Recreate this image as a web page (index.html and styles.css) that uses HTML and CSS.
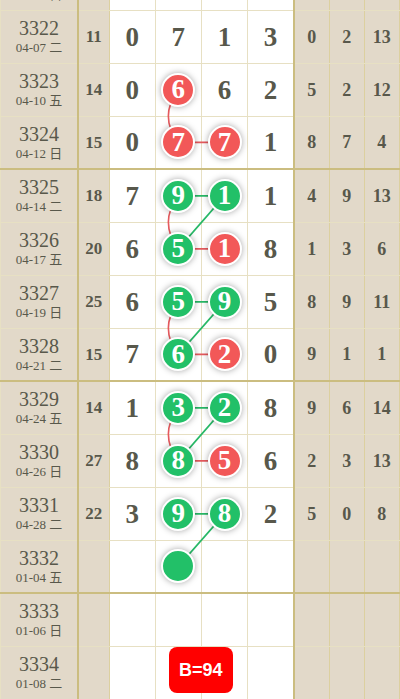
FILE: index.html
```html
<!DOCTYPE html>
<html lang="zh">
<head>
    <meta charset="UTF-8">
    <meta name="viewport" content="width=device-width, initial-scale=1.0">
    <title>走势图</title>
    <link rel="stylesheet" href="styles.css">
</head>
<body>
    <div class="board" id="board">
        <table class="grid">
            <colgroup>
                <col class="c-period">
                <col class="c-sum">
                <col class="c-digit">
                <col class="c-digit">
                <col class="c-digit">
                <col class="c-digit">
                <col class="c-side">
                <col class="c-side">
                <col class="c-side">
            </colgroup>
            <tbody id="rows"></tbody>
        </table>
        <svg class="links" id="links"></svg>
    </div>

    <script>
        // period, date, sum, four digits ('r'/'g' prefix = ball), three right values
        const rows = [
            ['3321', '04-05 日', '13', ['2', '5', '3', '3'], ['1', '9', '12']],
            ['3322', '04-07 二', '11', ['0', '7', '1', '3'], ['0', '2', '13']],
            ['3323', '04-10 五', '14', ['0', 'r6', '6', '2'], ['5', '2', '12']],
            ['3324', '04-12 日', '15', ['0', 'r7', 'r7', '1'], ['8', '7', '4']],
            ['3325', '04-14 二', '18', ['7', 'g9', 'g1', '1'], ['4', '9', '13']],
            ['3326', '04-17 五', '20', ['6', 'g5', 'r1', '8'], ['1', '3', '6']],
            ['3327', '04-19 日', '25', ['6', 'g5', 'g9', '5'], ['8', '9', '11']],
            ['3328', '04-21 二', '15', ['7', 'g6', 'r2', '0'], ['9', '1', '1']],
            ['3329', '04-24 五', '14', ['1', 'g3', 'g2', '8'], ['9', '6', '14']],
            ['3330', '04-26 日', '27', ['8', 'g8', 'r5', '6'], ['2', '3', '13']],
            ['3331', '04-28 二', '22', ['3', 'g9', 'g8', '2'], ['5', '0', '8']],
            ['3332', '01-04 五', '', ['', 'g', '', ''], ['', '', '']],
            ['3333', '01-06 日', '', ['', '', '', ''], ['', '', '']],
            ['3334', '01-08 二', '', ['', '', '', ''], ['', '', '']]
        ];

        // [row, col] -> [row, col], colour, curved
        const links = [
            [[2, 1], [3, 1], 'red', true],
            [[3, 1], [3, 2], 'red', false],
            [[4, 1], [4, 2], 'green', false],
            [[4, 1], [5, 1], 'red', true],
            [[4, 2], [5, 1], 'green', false],
            [[5, 1], [5, 2], 'red', false],
            [[6, 1], [6, 2], 'green', false],
            [[6, 1], [7, 1], 'red', true],
            [[6, 2], [7, 1], 'green', false],
            [[7, 1], [7, 2], 'red', false],
            [[8, 1], [8, 2], 'green', false],
            [[8, 1], [9, 1], 'red', true],
            [[8, 2], [9, 1], 'green', false],
            [[9, 1], [9, 2], 'red', false],
            [[10, 1], [10, 2], 'green', false],
            [[10, 2], [11, 1], 'green', false]
        ];

        function buildRows() {
            const body = document.getElementById('rows');

            rows.forEach((row, r) => {
                const tr = document.createElement('tr');
                if (Number(row[0]) % 4 === 0) tr.classList.add('group-end');

                let html = '<td class="period"><div class="no">' + row[0] + '</div><div class="date">' + row[1] + '</div></td>';
                html += '<td class="sum">' + row[2] + '</td>';

                row[3].forEach((d, c) => {
                    let inner = d;
                    if (d[0] === 'r' || d[0] === 'g') {
                        const kind = d[0] === 'r' ? 'red' : 'green';
                        inner = '<span class="ball ' + kind + '" id="b' + r + '-' + c + '">' + d.slice(1) + '</span>';
                    }
                    html += '<td class="digit">' + inner + '</td>';
                });

                row[4].forEach((v, i) => {
                    html += '<td class="side' + (i === 0 ? ' first' : '') + '">' + v + '</td>';
                });

                tr.innerHTML = html;
                body.appendChild(tr);
            });

            // badge in the last row
            const last = body.lastChild.children[3];
            last.classList.add('has-badge');
            last.innerHTML = '<span class="badge">B=94</span>';
        }

        function centerOf(id, box) {
            const rect = document.getElementById(id).getBoundingClientRect();
            return [rect.left + rect.width / 2 - box.left, rect.top + rect.height / 2 - box.top];
        }

        function drawLinks() {
            const board = document.getElementById('board');
            const svg = document.getElementById('links');
            const box = board.getBoundingClientRect();
            svg.setAttribute('width', box.width);
            svg.setAttribute('height', box.height);

            let out = '';
            links.forEach(([a, b, colour, curved]) => {
                const p = centerOf('b' + a[0] + '-' + a[1], box);
                const q = centerOf('b' + b[0] + '-' + b[1], box);
                if (curved) {
                    const cx = (p[0] + q[0]) / 2 - 20;
                    const cy = (p[1] + q[1]) / 2;
                    out += '<path class="' + colour + '" d="M' + p[0] + ' ' + p[1] + ' Q' + cx + ' ' + cy + ' ' + q[0] + ' ' + q[1] + '"/>';
                } else {
                    out += '<line class="' + colour + '" x1="' + p[0] + '" y1="' + p[1] + '" x2="' + q[0] + '" y2="' + q[1] + '"/>';
                }
            });
            svg.innerHTML = out;
        }

        buildRows();
        drawLinks();
    </script>
</body>
</html>
```

FILE: styles.css
```css
/* Page */
body {
    margin: 0;
    background-color: #fff;
    font-family: 'Liberation Serif', 'Noto Sans CJK SC', serif;
    color: #58584b;
    overflow: hidden;
}

/* Board is scrolled a little, first row half hidden */
.board {
    position: relative;
    width: 400px;
    margin-top: -43px;
}

/* Table grid */
.grid {
    border-collapse: collapse;
    table-layout: fixed;
    width: 400px;
}

.c-period { width: 77px; }
.c-sum { width: 31px; }
.c-digit { width: 46px; }
.c-side { width: 35px; }

.grid td {
    height: 52px;
    padding: 0;
    text-align: center;
    vertical-align: middle;
    border: 1px solid #e7e0c3;
    font-weight: bold;
}

.grid tr.group-end td {
    height: 51px;
    border-bottom: 2px solid #cbbd80;
}

/* Left columns */
.period, .sum, .side {
    background-color: #e2d9c9;
}

.grid td.period {
    border-right: 2px solid #cbbd80;
    font-weight: normal;
}

.period .no {
    font-size: 20px;
    line-height: 22px;
}

.period .date {
    font-size: 13px;
    line-height: 18px;
}

.sum {
    font-size: 17px;
}

.grid td.side, .grid td.sum {
    border-left-color: #dcd09f;
    border-right-color: #dcd09f;
}

.grid td.side.first {
    border-left: 2px solid #cbbd80;
}

.side {
    font-size: 18px;
}

/* Digits */
.digit {
    font-size: 27px;
}

.ball {
    position: relative;
    z-index: 2;
    display: inline-flex;
    align-items: center;
    justify-content: center;
    width: 30px;
    height: 30px;
    border: 2px solid #fff;
    border-radius: 50%;
    color: #fff;
    font-size: 27px;
    line-height: 1;
    box-shadow: 0 0 6px rgba(0, 0, 0, 0.35);
    vertical-align: middle;
    margin-top: -2px;
}

.ball.red {
    background-color: #f25858;
}

.ball.green {
    background-color: #22c068;
}

/* Link lines */
.links {
    position: absolute;
    top: 0;
    left: 0;
    z-index: 1;
    pointer-events: none;
}

.links line, .links path {
    fill: none;
    stroke-width: 1.6;
}

.links .red {
    stroke: #e55a5e;
}

.links .green {
    stroke: #27b866;
}

/* Badge over the last row */
.has-badge {
    position: relative;
}

.badge {
    position: absolute;
    z-index: 3;
    top: 0;
    left: 13px;
    width: 64px;
    height: 46px;
    display: flex;
    align-items: center;
    justify-content: center;
    background-color: #ff0000;
    border-radius: 8px;
    color: #fff;
    font-family: 'Liberation Sans', Arial, sans-serif;
    font-size: 18px;
    font-weight: bold;
}
```
